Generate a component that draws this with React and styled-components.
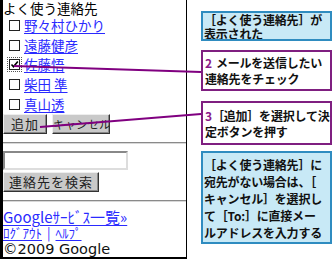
import React from "react";
import styled, { createGlobalStyle } from "styled-components";

const Global = createGlobalStyle`
  html, body { margin: 0; padding: 0; background: #fff; }
  body { width: 334px; height: 259px; overflow: hidden; }
`;

const Page = styled.div`
  position: relative;
  width: 334px;
  height: 259px;
  display: flex;
  align-items: flex-start;
  font-family: "Noto Sans CJK JP", "Noto Sans", sans-serif;
`;

const Phone = styled.div`
  width: 183px;
  height: 257px;
  border-left: 3px solid #000;
  border-right: 1px solid #000;
  border-bottom: 2px solid #000;
  display: flex;
  flex-direction: column;
  color: #000;
  font-size: 13px;
`;

const Title = styled.div`
  height: 16px;
  line-height: 17px;
  font-size: 13.5px;
  white-space: nowrap;
`;

const Row = styled.div`
  height: 19.6px;
  display: flex;
  align-items: center;
  padding-left: 6px;
  gap: 4px;
`;

const Box = styled.span`
  width: 9px;
  height: 9px;
  border: 1px solid #222;
  background: #fff;
  position: relative;
  flex: none;
  outline: ${(p) => (p.$checked ? "1px dotted #555" : "none")};
  outline-offset: 1px;
  svg { position: absolute; left: 0; top: 0; }
`;

const Link = styled.a`
  color: #2a2aff;
  text-decoration: underline;
  text-underline-offset: 2px;
  font-size: ${(p) => p.$size || "13.5px"};
  line-height: 15px;
  white-space: nowrap;
`;

const Buttons = styled.div`
  display: flex;
  gap: 5px;
  height: 20px;
`;

const Button = styled.button`
  font-family: "Noto Sans CJK JP", sans-serif;
  font-size: ${(p) => p.$fs || "13px"};
  color: #222;
  background: #c9c9c9;
  border: 1px solid;
  border-color: #eee #333 #333 #eee;
  box-shadow: inset -1px -1px 0 #888;
  height: 20px;
  width: ${(p) => p.$w};
  padding: 0;
  margin: 0;
  line-height: 18px;
  white-space: nowrap;
  overflow: hidden;
  letter-spacing: ${(p) => p.$ls || "0"};
`;

const Rule = styled.div`
  height: 0;
  border-top: 1px solid #8a8a8a;
  border-bottom: 1px solid #d8d8d8;
  margin: ${(p) => p.$m};
`;

const Field = styled.div`
  width: 121px;
  height: 15px;
  border: 2px solid;
  border-color: #888 #ddd #ddd #888;
  background: #fff;
  margin-bottom: 2px;
`;

const Footer = styled.div`
  display: flex;
  flex-direction: column;
  margin-top: 7px;
`;

const FootLine = styled.div`
  height: 16px;
  white-space: nowrap;
  display: flex;
  align-items: center;
  overflow: visible;
`;

const Sep = styled.span`
  color: #2a2aff;
  font-size: 13px;
  line-height: 15px;
  margin: 0 5px;
`;

const Copy = styled.div`
  font-family: "DejaVu Sans", sans-serif;
  font-size: 14.5px;
  line-height: 16px;
  color: #111;
  white-space: nowrap;
`;

const Notes = styled.div`
  display: flex;
  flex-direction: column;
  padding-left: 14px;
  padding-top: 11px;
  width: 131px;
`;

const Note = styled.div`
  box-sizing: border-box;
  width: 131px;
  height: ${(p) => p.$h};
  margin-top: ${(p) => p.$mt || "0"};
  border: 2px solid ${(p) => (p.$kind === "info" ? "#2f8cc0" : "#7f1f80")};
  background: ${(p) => (p.$kind === "info" ? "#c8e9f6" : "#fff")};
  font-weight: 700;
  font-size: 12px;
  line-height: ${(p) => p.$lh};
  padding: ${(p) => p.$pad};
  color: #111;
  white-space: nowrap;
  letter-spacing: -0.2px;
  overflow: hidden;
`;

const Num = styled.span`
  color: #8a1a8a;
  margin-right: ${(p) => p.$gap || "0"};
`;

const Leaders = styled.svg`
  position: absolute;
  left: 0;
  top: 0;
  pointer-events: none;
`;

const contacts = [
  { name: "野々村ひかり" },
  { name: "遠藤健彦" },
  { name: "佐藤悟", checked: true },
  { name: "柴田 準" },
  { name: "真山透" },
];

export default function App() {
  return (
    <>
      <Global />
      <Page>
        <Phone>
          <Title>よく使う連絡先</Title>
          {contacts.map((c) => (
            <Row key={c.name}>
              <Box $checked={c.checked}>
                {c.checked && (
                  <svg width="9" height="9" viewBox="0 0 9 9">
                    <path d="M1.5 4.5 L3.5 6.8 L7.8 1.5" fill="none" stroke="#000" strokeWidth="1.6" />
                  </svg>
                )}
              </Box>
              <Link href="#">{c.name}</Link>
            </Row>
          ))}
          <Buttons>
            <Button $w="44px" $ls="1px">追加</Button>
            <Button $w="58px" $fs="11.5px">キャンセル</Button>
          </Buttons>
          <Rule $m="8px 0 7px 0" />
          <Field />
          <Button $w="96px" $ls="1px">連絡先を検索</Button>
          <Rule $m="8px 0 0 0" />
          <Footer>
            <FootLine>
              <Link href="#" $size="15px">Googleｻｰﾋﾞｽ一覧»</Link>
            </FootLine>
            <FootLine>
              <Link href="#" $size="13px">ﾛｸﾞｱｳﾄ</Link>
              <Sep>|</Sep>
              <Link href="#" $size="13px">ﾍﾙﾌﾟ</Link>
            </FootLine>
            <Copy>©2009 Google</Copy>
          </Footer>
        </Phone>
        <Notes>
          <Note $kind="info" $h="30px" $lh="13.5px" $pad="0 1px">
            ［よく使う連絡先］が<br />表示された
          </Note>
          <Note $kind="step" $h="41px" $lh="16px" $pad="3px 2px" $mt="9px">
            <Num $gap="4px">2</Num>メールを送信したい<br />連絡先をチェック
          </Note>
          <Note $kind="step" $h="44px" $lh="16px" $pad="5px 1px 5px 2px" $mt="10px">
            <Num>3</Num>［追加］を選択して決<br />定ボタンを押す
          </Note>
          <Note $kind="info" $h="93px" $lh="17px" $pad="3px 1px" $mt="6px">
            ［よく使う連絡先］に<br />宛先がない場合は、［<br />キャンセル］を選択し<br />て［To:］に直接メー<br />ルアドレスを入力する
          </Note>
        </Notes>
        <Leaders width="334" height="259" viewBox="0 0 334 259">
          <line x1="14" y1="66" x2="201" y2="72" stroke="#800080" strokeWidth="2" />
          <line x1="40" y1="127" x2="201" y2="114" stroke="#800080" strokeWidth="2" />
        </Leaders>
      </Page>
    </>
  );
}
